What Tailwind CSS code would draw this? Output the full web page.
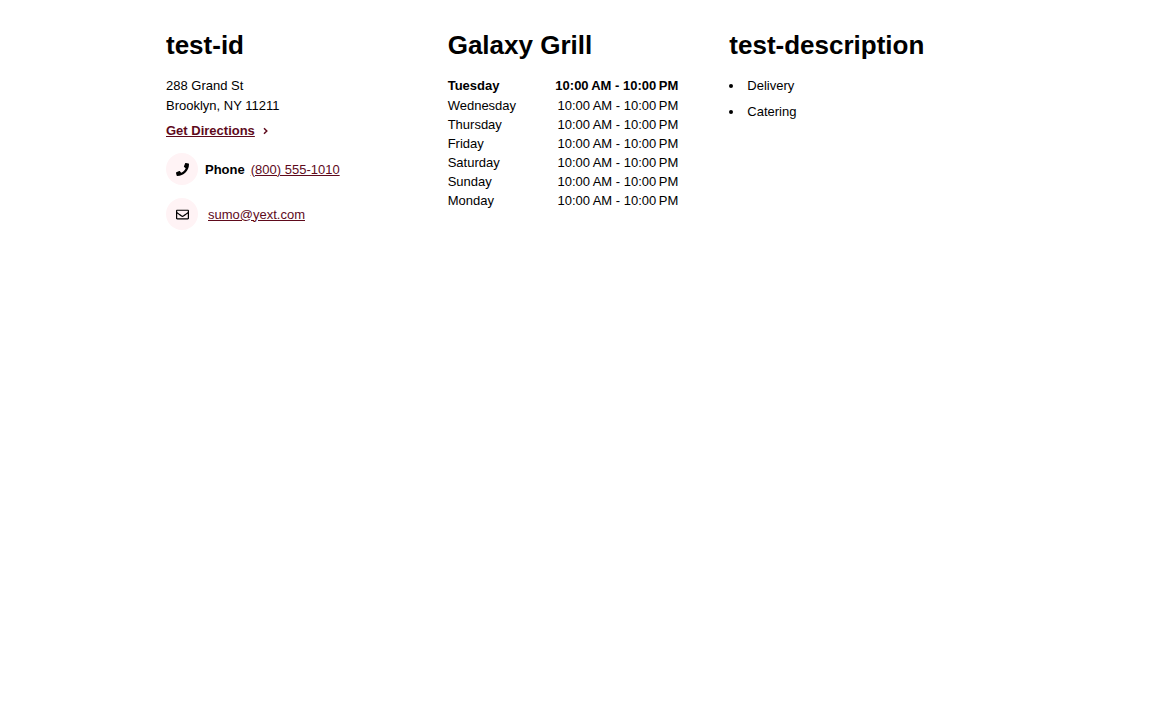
<!DOCTYPE html>
<html lang="en">
<head>
<meta charset="utf-8">
<meta name="viewport" content="width=device-width, initial-scale=1">
<title>Galaxy Grill</title>
<script src="https://cdn.jsdelivr.net/npm/@tailwindcss/browser@4"></script>
</head>
<body class="bg-white text-black text-[13px] leading-[19px] font-['Liberation_Sans',Arial,sans-serif]">
<main class="mx-auto grid max-w-[820px] grid-cols-1 gap-[51px] py-[26px] pr-[26px] sm:grid-cols-3">
  <section>
    <h2 class="mb-3 text-[26px] leading-[38px] font-bold whitespace-nowrap">test-id</h2>
    <address class="not-italic">
      <div class="leading-5">288 Grand St</div>
      <div class="leading-5">Brooklyn, NY 11211</div>
    </address>
    <a href="#directions" class="mt-[5px] flex items-center gap-2 font-bold text-[#5e0a1c]">
      <span class="underline">Get Directions</span>
      <svg class="h-2 w-[5px]" viewBox="0 0 5 8" fill="none" stroke="currentColor" stroke-width="1.5" aria-hidden="true"><path d="M1 1.2 3.8 4 1 6.8"/></svg>
    </a>
    <div class="mt-[13px] flex items-center">
      <span class="mr-[7px] flex size-8 items-center justify-center rounded-full bg-[#fff3f5]">
        <svg class="size-[13px]" viewBox="0 0 512 512" fill="currentColor" aria-hidden="true"><path d="M493.4 24.6l-104-24c-11.3-2.6-22.9 3.3-27.5 13.9l-48 112c-4.2 9.8-1.4 21.3 6.9 28l60.6 49.6c-36 76.7-98.9 140.5-177.2 177.2l-49.6-60.6c-6.8-8.3-18.2-11.100-28-6.900l-112 48C3.900 366.500-2 378.100.6 389.400l24 104C27.100 504.200 36.700 512 48 512c256.100 0 464-207.500 464-464 0-11.200-7.700-20.900-18.600-23.400z"/></svg>
      </span>
      <span class="mr-[6px] font-bold">Phone</span>
      <a href="tel:+18005551010" class="text-[#5e0a1c] underline">(800) 555-1010</a>
    </div>
    <div class="mt-[13px] flex items-center">
      <span class="mr-[10px] flex size-8 items-center justify-center rounded-full bg-[#fff3f5]">
        <svg class="size-[13px]" viewBox="0 0 512 512" fill="currentColor" aria-hidden="true"><path d="M464 64H48C21.490 64 0 85.490 0 112v288c0 26.510 21.490 48 48 48h416c26.510 0 48-21.490 48-48V112c0-26.510-21.490-48-48-48zm0 48v40.805c-22.422 18.259-58.168 46.651-134.587 106.490-16.841 13.247-50.201 45.072-73.413 44.701-23.208.375-56.579-31.459-73.413-44.701C106.180 199.465 70.425 171.067 48 152.805V112h416zM48 400V214.398c22.914 18.251 55.409 43.862 104.938 82.646 21.857 17.205 60.134 55.186 103.062 54.955 42.717.231 80.509-37.199 103.053-54.947 49.528-38.783 82.032-64.401 104.947-82.653V400H48z"/></svg>
      </span>
      <a href="mailto:sumo@yext.com" class="text-[#5e0a1c] underline">sumo@yext.com</a>
    </div>
  </section>
  <section>
    <h2 class="mb-3 text-[26px] leading-[38px] font-bold whitespace-nowrap">Galaxy Grill</h2>
    <table class="w-full" aria-label="Opening hours">
      <tbody class="[&_td]:p-0 [&_td]:text-right [&_td]:whitespace-nowrap [&_th]:p-0 [&_th]:text-left">
        <tr class="font-bold leading-5"><th scope="row">Tuesday</th><td>10:00&#8239;AM - 10:00&#8239;PM</td></tr>
        <tr><th scope="row" class="font-normal">Wednesday</th><td>10:00&#8239;AM - 10:00&#8239;PM</td></tr>
        <tr><th scope="row" class="font-normal">Thursday</th><td>10:00&#8239;AM - 10:00&#8239;PM</td></tr>
        <tr><th scope="row" class="font-normal">Friday</th><td>10:00&#8239;AM - 10:00&#8239;PM</td></tr>
        <tr><th scope="row" class="font-normal">Saturday</th><td>10:00&#8239;AM - 10:00&#8239;PM</td></tr>
        <tr><th scope="row" class="font-normal">Sunday</th><td>10:00&#8239;AM - 10:00&#8239;PM</td></tr>
        <tr><th scope="row" class="font-normal">Monday</th><td>10:00&#8239;AM - 10:00&#8239;PM</td></tr>
      </tbody>
    </table>
  </section>
  <section>
    <h2 class="mb-3 text-[26px] leading-[38px] font-bold whitespace-nowrap">test-description</h2>
    <ul class="flex list-inside list-disc flex-col gap-[7px]">
      <li>Delivery</li>
      <li>Catering</li>
    </ul>
  </section>
</main>
</body>
</html>
